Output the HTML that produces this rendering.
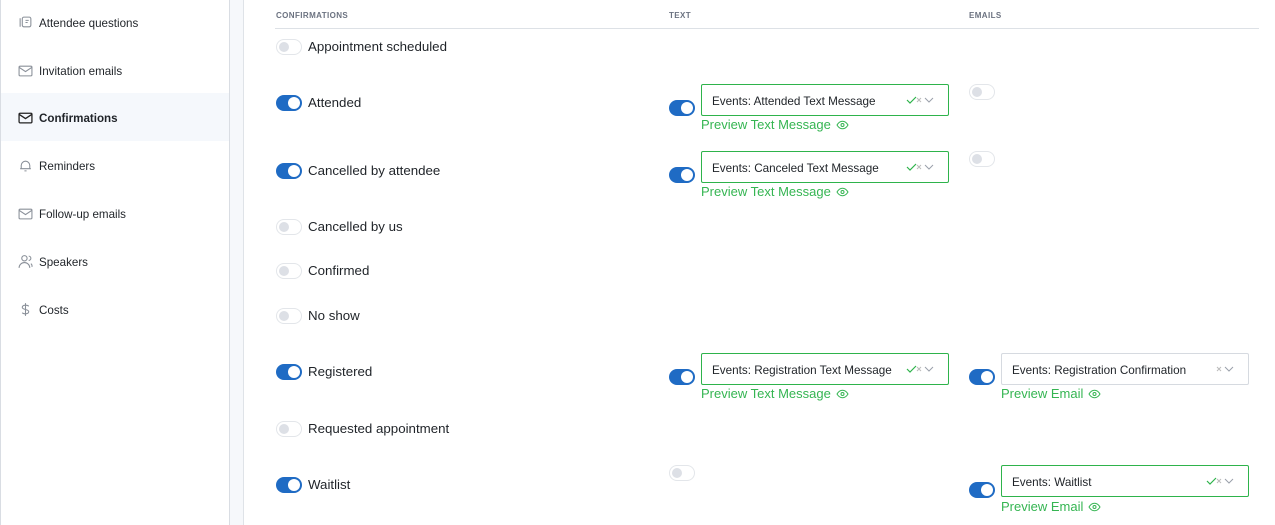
<!DOCTYPE html>
<html><head><meta charset="utf-8"><style>
*{box-sizing:border-box;margin:0;padding:0}
body{width:1275px;height:525px;overflow:hidden;background:#fff;font-family:"Liberation Sans",sans-serif;color:#1f2328;position:relative}
.sb{position:absolute;left:0;top:0;width:230px;height:525px;border-left:1px solid #d9dde3;border-right:1px solid #d9dde3;background:#fff}
.strip{position:absolute;left:230px;top:0;width:14px;height:525px;background:#f6f8fb;border-right:1px solid #dfe3e8}
.item{position:absolute;left:0;width:228px;height:48px;font-size:11.6px;display:flex;align-items:center;padding-left:38px;padding-top:2px}
.item.act{background:#f5f8fc;font-weight:bold}
.item svg{position:absolute;left:17px;top:17px}
.hd{position:absolute;top:11px;font-size:8px;letter-spacing:.4px;color:#6b7280;font-weight:bold}
.line{position:absolute;left:275px;top:28px;width:984px;height:1px;background:#dde1e6}
.tg{position:absolute;width:26px;height:16px;border-radius:8px}
.tg.off{background:#fff;border:1px solid #e3e6ea}
.tg.off::after{content:"";position:absolute;left:2px;top:2px;width:10px;height:10px;border-radius:50%;background:#dde0e6}
.tg.on{background:#1f6bc4}
.tg.on::after{content:"";position:absolute;right:2px;top:2px;width:12px;height:12px;border-radius:50%;background:#fff}
.lb{position:absolute;left:308px;font-size:13.3px;color:#1f2328}
.sel{position:absolute;width:248px;height:32px;border:1px solid #2eb34b;border-radius:2px;font-size:11.7px;padding:10px 0 0 10px}
.sel.gr{border-color:#d6dae0}
.sel .ic{position:absolute;right:10px;top:9px}
.pv{position:absolute;font-size:13px;color:#35b552}
.pv svg{vertical-align:-1px;margin-left:5px}
</style></head><body>
<div class="sb">
 <div class="item" style="top:-2px"><svg width="15" height="15" viewBox="0 0 14 14" fill="none" stroke="#8a9099" stroke-width="1"><rect x="4" y="2" width="8" height="9" rx="1.5"/><path d="M2 3v8M7 5h3M7 7h2"/></svg>Attendee questions</div>
 <div class="item" style="top:46px"><svg width="15" height="15" viewBox="0 0 14 14" fill="none" stroke="#8a9099" stroke-width="1"><rect x="1" y="3" width="12" height="9" rx="1"/><path d="M1 4l6 4 6-4"/></svg>Invitation emails</div>
 <div class="item act" style="top:93px"><svg width="15" height="15" viewBox="0 0 14 14" fill="none" stroke="#222" stroke-width="1.2"><rect x="1" y="3" width="12" height="9" rx="1"/><path d="M1 4l6 4 6-4"/></svg>Confirmations</div>
 <div class="item" style="top:141px"><svg width="15" height="15" viewBox="0 0 14 14" fill="none" stroke="#8a9099" stroke-width="1"><path d="M3 10V7a4 4 0 018 0v3M2 10h10M6 12h2"/></svg>Reminders</div>
 <div class="item" style="top:189px"><svg width="15" height="15" viewBox="0 0 14 14" fill="none" stroke="#8a9099" stroke-width="1"><rect x="1" y="3" width="12" height="9" rx="1"/><path d="M1 4l6 4 6-4"/></svg>Follow-up emails</div>
 <div class="item" style="top:237px"><svg width="15" height="15" viewBox="0 0 14 14" fill="none" stroke="#8a9099" stroke-width="1"><circle cx="6" cy="4" r="2.5"/><path d="M1 13a5 5 0 0110 0M10 2a2 2 0 010 4M12 9a3 3 0 011 3"/></svg>Speakers</div>
 <div class="item" style="top:285px"><svg width="15" height="15" viewBox="0 0 14 14" fill="none" stroke="#8a9099" stroke-width="1"><path d="M7 1v12M10 4c-1-1.5-6-1.5-6 1s6 1.5 6 4-5 2.5-6 1"/></svg>Costs</div>
</div>
<div class="strip"></div>
<div class="hd" style="left:276px">CONFIRMATIONS</div>
<div class="hd" style="left:669px">TEXT</div>
<div class="hd" style="left:969px">EMAILS</div>
<div class="line"></div>

<div class="tg off" style="left:276px;top:39px"></div><div class="lb" style="top:39px">Appointment scheduled</div>
<div class="tg on" style="left:276px;top:95px"></div><div class="lb" style="top:95px">Attended</div>
<div class="tg on" style="left:276px;top:163px"></div><div class="lb" style="top:163px">Cancelled by attendee</div>
<div class="tg off" style="left:276px;top:219px"></div><div class="lb" style="top:219px">Cancelled by us</div>
<div class="tg off" style="left:276px;top:263px"></div><div class="lb" style="top:263px">Confirmed</div>
<div class="tg off" style="left:276px;top:308px"></div><div class="lb" style="top:308px">No show</div>
<div class="tg on" style="left:276px;top:364px"></div><div class="lb" style="top:364px">Registered</div>
<div class="tg off" style="left:276px;top:421px"></div><div class="lb" style="top:421px">Requested appointment</div>
<div class="tg on" style="left:276px;top:477px"></div><div class="lb" style="top:477px">Waitlist</div>

<div class="tg on" style="left:669px;top:100px"></div>
<div class="sel" style="left:701px;top:84px">Events: Attended Text Message<svg class="ic" width="32" height="12" viewBox="0 0 32 12" fill="none"><path d="M1 6l3 3 6-6" stroke="#2eb34b" stroke-width="1.2"/><path d="M11 4l4 4M15 4l-4 4" stroke="#bbb"/><path d="M19 4l4 4 4-4" stroke="#9aa0aa"/></svg></div>
<div class="pv" style="left:701px;top:117px">Preview Text Message<svg width="13" height="10" viewBox="0 0 13 10" fill="none" stroke="#35b552"><path d="M1 5c3-5 8-5 11 0-3 5-8 5-11 0z"/><circle cx="6.5" cy="5" r="1.5"/></svg></div>
<div class="tg on" style="left:669px;top:167px"></div>
<div class="sel" style="left:701px;top:151px">Events: Canceled Text Message<svg class="ic" width="32" height="12" viewBox="0 0 32 12" fill="none"><path d="M1 6l3 3 6-6" stroke="#2eb34b" stroke-width="1.2"/><path d="M11 4l4 4M15 4l-4 4" stroke="#bbb"/><path d="M19 4l4 4 4-4" stroke="#9aa0aa"/></svg></div>
<div class="pv" style="left:701px;top:184px">Preview Text Message<svg width="13" height="10" viewBox="0 0 13 10" fill="none" stroke="#35b552"><path d="M1 5c3-5 8-5 11 0-3 5-8 5-11 0z"/><circle cx="6.5" cy="5" r="1.5"/></svg></div>
<div class="tg on" style="left:669px;top:369px"></div>
<div class="sel" style="left:701px;top:353px">Events: Registration Text Message<svg class="ic" width="32" height="12" viewBox="0 0 32 12" fill="none"><path d="M1 6l3 3 6-6" stroke="#2eb34b" stroke-width="1.2"/><path d="M11 4l4 4M15 4l-4 4" stroke="#bbb"/><path d="M19 4l4 4 4-4" stroke="#9aa0aa"/></svg></div>
<div class="pv" style="left:701px;top:386px">Preview Text Message<svg width="13" height="10" viewBox="0 0 13 10" fill="none" stroke="#35b552"><path d="M1 5c3-5 8-5 11 0-3 5-8 5-11 0z"/><circle cx="6.5" cy="5" r="1.5"/></svg></div>
<div class="tg off" style="left:669px;top:465px"></div>

<div class="tg off" style="left:969px;top:84px"></div>
<div class="tg off" style="left:969px;top:151px"></div>
<div class="tg on" style="left:969px;top:369px"></div>
<div class="sel gr" style="left:1001px;top:353px">Events: Registration Confirmation<svg class="ic" width="22" height="12" viewBox="10 0 22 12" fill="none"><path d="M11 4l4 4M15 4l-4 4" stroke="#bbb"/><path d="M19 4l4 4 4-4" stroke="#9aa0aa"/></svg></div>
<div class="pv" style="left:1001px;top:386px">Preview Email<svg width="13" height="10" viewBox="0 0 13 10" fill="none" stroke="#35b552"><path d="M1 5c3-5 8-5 11 0-3 5-8 5-11 0z"/><circle cx="6.5" cy="5" r="1.5"/></svg></div>
<div class="tg on" style="left:969px;top:482px"></div>
<div class="sel" style="left:1001px;top:465px">Events: Waitlist<svg class="ic" width="32" height="12" viewBox="0 0 32 12" fill="none"><path d="M1 6l3 3 6-6" stroke="#2eb34b" stroke-width="1.2"/><path d="M11 4l4 4M15 4l-4 4" stroke="#bbb"/><path d="M19 4l4 4 4-4" stroke="#9aa0aa"/></svg></div>
<div class="pv" style="left:1001px;top:499px">Preview Email<svg width="13" height="10" viewBox="0 0 13 10" fill="none" stroke="#35b552"><path d="M1 5c3-5 8-5 11 0-3 5-8 5-11 0z"/><circle cx="6.5" cy="5" r="1.5"/></svg></div>
</body></html>
